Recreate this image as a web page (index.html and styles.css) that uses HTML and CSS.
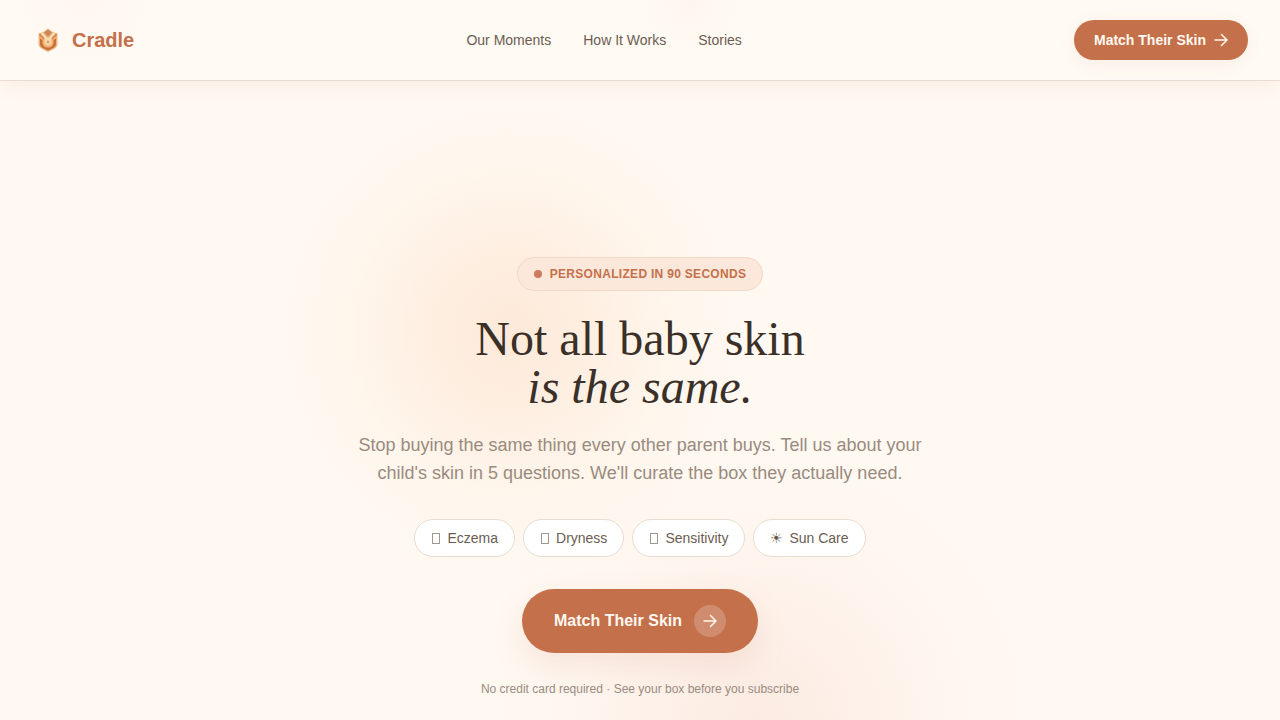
FILE: index.html
```html
<!DOCTYPE html>
<html lang="en">
<head>
<meta charset="utf-8">
<meta name="viewport" content="width=device-width, initial-scale=1">
<title>Cradle</title>
<link rel="stylesheet" href="styles.css">
</head>
<body>
<header class="site-header">
  <a class="brand" href="#">
    <svg class="brand-mark" viewBox="0 0 32 32" aria-hidden="true">
      <path d="M16 4.500 20 7.500l5.500 2V20c0 3.500-4.500 5.500-9.500 8-5-2.500-9.500-4.500-9.500-8V9.500l5.500-2z" fill="#efb37c"/>
      <path d="M8 14.500 10.500 16v2.500c0 3 2.500 5 5.500 5s5.500-2 5.500-5V16l2.500-1.500V20c0 3-3.500 4.500-8 6.500-4.500-2-8-3.500-8-6.500z" fill="#c8703c"/>
      <path d="M16 5.500 20 8.500 16 12.500 12 8.500z" fill="#cf8655"/>
      <path d="M7.500 10.500 12.500 15M24.500 10.500 19.500 15" fill="none" stroke="#d88d55" stroke-width="2"/>
      <path d="M9.500 8.500 14 14.500h4l4.500-6" fill="none" stroke="#fdebcf" stroke-width="1.500"/>
      <path d="M12.500 14.500h7V18c0 2-1.500 3.500-3.500 3.500s-3.500-1.500-3.500-3.500z" fill="#fad7a8"/>
      <circle cx="16" cy="18" r="1.500" fill="#e5a36b"/>
    </svg>
    <span>Cradle</span>
  </a>
  <nav class="site-nav" aria-label="Main">
    <a href="#">Our Moments</a>
    <a href="#">How It Works</a>
    <a href="#">Stories</a>
  </nav>
  <button class="button button-small" type="button">
    Match Their Skin
    <svg class="arrow" viewBox="0 0 14 14" aria-hidden="true"><path d="M1 7h12M7.500 1.500 13 7l-5.500 5.500"/></svg>
  </button>
</header>
<main class="hero">
  <p class="badge"><span class="badge-dot"></span>Personalized in 90 seconds</p>
  <h1 class="title">Not all baby skin<br><em>is the same.</em></h1>
  <p class="lead">Stop buying the same thing every other parent buys. Tell us about your child's skin in 5 questions. We'll curate the box they actually need.</p>
  <div class="chips">
    <button class="chip" type="button"><span class="chip-box"></span>Eczema</button>
    <button class="chip" type="button"><span class="chip-box"></span>Dryness</button>
    <button class="chip" type="button"><span class="chip-box"></span>Sensitivity</button>
    <button class="chip" type="button"><span aria-hidden="true">☀</span>Sun Care</button>
  </div>
  <button class="button button-large" type="button">
    Match Their Skin
    <span class="arrow-disc"><svg class="arrow" viewBox="0 0 14 14" aria-hidden="true"><path d="M1 7h12M7.500 1.500 13 7l-5.500 5.500"/></svg></span>
  </button>
  <p class="note">No credit card required · See your box before you subscribe</p>
</main>
</body>
</html>
```
FILE: styles.css
```css
* {
  box-sizing: border-box;
}

body {
  margin: 0;
  min-height: 100vh;
  display: flex;
  flex-direction: column;
  background: #fff9f2;
  color: #3a3028;
  font-family: "Liberation Sans", Arial, sans-serif;
}

a {
  color: inherit;
  text-decoration: none;
}

button {
  font-family: inherit;
  cursor: pointer;
}

.site-header {
  position: relative;
  display: flex;
  justify-content: space-between;
  align-items: center;
  padding: 20px 32px;
  border-bottom: 1px solid #e8dcd0;
  background:
    radial-gradient(circle at 85px 0, rgba(250, 224, 208, 0.1), transparent 70px),
    radial-gradient(circle at 54% 0, rgba(250, 224, 208, 0.15), transparent 50px),
    #fffaf3;
  box-shadow: 0 4px 20px rgba(196, 112, 75, 0.09);
}

.brand {
  display: flex;
  align-items: center;
  gap: 8px;
  color: #c4704b;
  font-size: 20px;
  font-weight: 700;
}

.brand-mark {
  width: 32px;
  height: 32px;
}

.site-nav {
  display: flex;
  gap: 32px;
  color: #6b5d52;
  font-size: 14px;
}

.button {
  display: inline-flex;
  align-items: center;
  border: 0;
  border-radius: 32px;
  background: #c4704b;
  color: #fff8f0;
  font-weight: 700;
}

.button-small {
  gap: 8px;
  height: 40px;
  padding: 0 20px;
  font-size: 14px;
  box-shadow: 0 4px 16px rgba(196, 112, 75, 0.08);
}

.button-large {
  gap: 12px;
  margin-bottom: 28px;
  padding: 16px 32px;
  font-size: 16px;
  box-shadow: 0 12px 32px rgba(196, 112, 75, 0.13);
}

.arrow {
  width: 14px;
  height: 14px;
  fill: none;
  stroke: currentColor;
  stroke-width: 1.5;
  stroke-linecap: round;
  stroke-linejoin: round;
}

.arrow-disc {
  display: grid;
  place-items: center;
  width: 32px;
  height: 32px;
  border-radius: 50%;
  background: rgba(255, 255, 255, 0.2);
}

.hero {
  flex: 1;
  display: flex;
  flex-direction: column;
  align-items: center;
  padding: 176px 24px 23px;
  text-align: center;
  background:
    radial-gradient(circle at calc(50% - 130px) 250px, rgba(252, 226, 205, 0.7), rgba(253, 230, 211, 0.5) 90px, rgba(254, 239, 222, 0.25) 170px, rgba(255, 247, 238, 0) 250px),
    radial-gradient(circle at calc(50% + 120px) 640px, rgba(248, 221, 210, 0.5), rgba(250, 225, 215, 0.35) 100px, rgba(253, 234, 226, 0.2) 190px, rgba(255, 244, 238, 0) 290px);
}

.badge {
  display: flex;
  align-items: center;
  gap: 8px;
  margin: 0 0 24px;
  padding: 8px 16px;
  border: 1px solid #f2d8c7;
  border-radius: 17px;
  background: #fbe8da;
  color: #c4704b;
  font-size: 12px;
  font-weight: 700;
  line-height: 16px;
  letter-spacing: 0.3px;
  text-transform: uppercase;
}

.badge-dot {
  width: 8px;
  height: 8px;
  border-radius: 50%;
  background: #cc7c5c;
}

.title {
  margin: 0 0 20px;
  font-family: "Liberation Serif", "Times New Roman", serif;
  font-size: 48px;
  font-weight: 400;
  line-height: 48px;
}

.lead {
  max-width: 576px;
  margin: 0 0 32px;
  color: #9a8b7f;
  font-size: 18px;
  line-height: 28px;
}

.chips {
  display: flex;
  flex-wrap: wrap;
  justify-content: center;
  gap: 8px;
  margin-bottom: 32px;
}

.chip {
  display: flex;
  align-items: center;
  gap: 6px;
  padding: 8px 16px;
  border: 1px solid #e8dcd0;
  border-radius: 19px;
  background: #fff;
  color: #6b5d52;
  font-size: 14px;
  line-height: 20px;
}

.chip-box {
  width: 8px;
  height: 11px;
  margin: 0 1px;
  border: 1px solid #a1978f;
}

.note {
  margin: 0;
  color: #9a8b7f;
  font-size: 12px;
  line-height: 16px;
}
```
